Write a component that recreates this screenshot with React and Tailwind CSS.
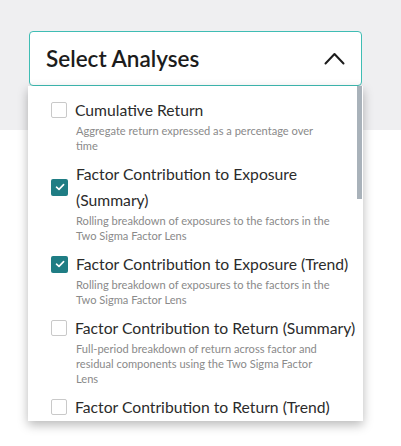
import React from 'react';

const items = [
  { label: 'Cumulative Return', desc: 'Aggregate return expressed as a percentage over time', checked: false },
  { label: 'Factor Contribution to Exposure (Summary)', desc: 'Rolling breakdown of exposures to the factors in the Two Sigma Factor Lens', checked: true },
  { label: 'Factor Contribution to Exposure (Trend)', desc: 'Rolling breakdown of exposures to the factors in the Two Sigma Factor Lens', checked: true },
  { label: 'Factor Contribution to Return (Summary)', desc: 'Full-period breakdown of return across factor and residual components using the Two Sigma Factor Lens', checked: false },
  { label: 'Factor Contribution to Return (Trend)', desc: '', checked: false },
];

function Checkbox({ checked }) {
  if (checked) {
    return (
      <div className="w-[17px] h-[17px] shrink-0 rounded-[2px] bg-[#1f7d84] flex items-center justify-center">
        <svg width="10" height="8" viewBox="0 0 10 8" fill="none">
          <polyline points="1.5,4.2 4,6.4 8.6,1.6" stroke="white" strokeWidth="1.6" strokeLinecap="round" strokeLinejoin="round" />
        </svg>
      </div>
    );
  }
  return <div className="w-[16px] h-[16px] shrink-0 rounded-[2px] border border-[#c9c9c9] bg-white" />;
}

function Option({ item }) {
  return (
    <div className="pt-[8px] first:pt-0">
      <div className="flex items-center">
        <Checkbox checked={item.checked} />
        <div className="ml-[8px] w-[290px] text-[15.7px] leading-[26px] text-[#2b2b2b]">{item.label}</div>
      </div>
      {item.desc && (
        <div className="ml-[25px] w-[255px] text-[11.1px] leading-[15px] text-[#8a8a8a]">{item.desc}</div>
      )}
    </div>
  );
}

export default function App() {
  return (
    <div className="relative w-[401px] h-[446px] bg-white overflow-hidden" style={{ fontFamily: 'Lato, "Noto Sans", sans-serif' }}>
      <div className="h-[130px] bg-[#efeff1] pt-[31px] pl-[29px]">
        <div className="relative w-[333px]">
          <div className="h-[55px] rounded-[4px] border border-[#3fbdb4] bg-white flex items-center justify-between pl-[16px] pr-[16px]">
            <span className="text-[22.5px] font-semibold text-[#1c1c1c]">Select Analyses</span>
            <svg width="21" height="13" viewBox="0 0 21 13" fill="none">
              <polyline points="1.5,11.5 10.5,2 19.5,11.5" stroke="#1c1c1c" strokeWidth="2" strokeLinecap="round" strokeLinejoin="round" />
            </svg>
          </div>
          <div className="absolute top-[55px] left-[-1px] w-[335px] h-[335px] bg-white shadow-[0_4px_10px_rgba(0,0,0,0.28)] overflow-hidden">
            <div className="absolute right-[1px] top-0 w-[5px] h-[113px] bg-[#a9b2ba]" />
            <div className="pt-[11px] pl-[23px]">
              {items.map((it) => (
                <Option key={it.label} item={it} />
              ))}
            </div>
          </div>
        </div>
      </div>
    </div>
  );
}
